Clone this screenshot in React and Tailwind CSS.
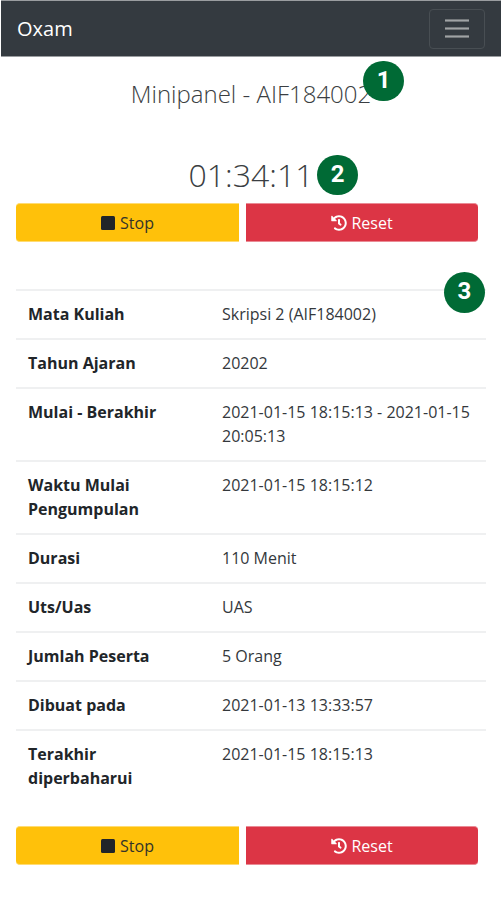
import { FaHistory } from "react-icons/fa";

const ROWS = [
  ["Mata Kuliah", "Skripsi 2 (AIF184002)"],
  ["Tahun Ajaran", "20202"],
  ["Mulai - Berakhir", "2021-01-15 18:15:13 - 2021-01-15 20:05:13"],
  ["Waktu Mulai Pengumpulan", "2021-01-15 18:15:12"],
  ["Durasi", "110 Menit"],
  ["Uts/Uas", "UAS"],
  ["Jumlah Peserta", "5 Orang"],
  ["Dibuat pada", "2021-01-13 13:33:57"],
  ["Terakhir diperbaharui", "2021-01-15 18:15:13"],
];

function Badge({ className, children }) {
  return (
    <span
      className={`absolute flex h-[40.6px] w-[40.6px] items-center justify-center rounded-full bg-[#006a35] pb-[2px] font-['Roboto',sans-serif] text-2xl font-bold text-white ${className}`}
    >
      {children}
    </span>
  );
}

function Actions() {
  return (
    <div className="flex h-[39px] w-[462px] gap-[7px] text-base leading-6">
      <button className="flex w-[223px] items-center justify-center gap-[5px] rounded-l border-y border-[#ffdc73] bg-[#ffc10a] text-[#33332a]">
        <span className="h-[14px] w-[14px] rounded-[1.5px] bg-[#212529]" />
        Stop
      </button>
      <button className="flex w-[232px] items-center justify-center gap-[4px] rounded-r border-y border-[#ea8b95] bg-[#dc3545] text-white">
        <FaHistory size={16} />
        Reset
      </button>
    </div>
  );
}

function MenuBar() {
  return <span className="h-[3px] w-6 border-y border-[#73777a] bg-[#a0a3a5]" />;
}

export default function App() {
  return (
    <div className="min-h-[898px] w-[501px] bg-white font-['Open_Sans',sans-serif] text-[#212529]">
      <nav className="ml-px flex h-[57px] items-center justify-between border-y border-[#9a9da0] bg-[#343a40] pr-4 pl-4">
        <span className="text-xl leading-[30px] text-white">Oxam</span>
        <button
          aria-label="Menu"
          className="flex h-10 w-14 flex-col items-center justify-center gap-[5px] rounded border border-[#484e53]"
        >
          <MenuBar />
          <MenuBar />
          <MenuBar />
        </button>
      </nav>

      <main className="pl-4">
        <header className="relative flex w-[470px] flex-col items-center pt-[22px] text-[#3a3e42]">
          <h1 className="text-2xl leading-[29px] font-light">Minipanel - AIF184002</h1>
          <Badge className="top-[3.8px] left-[347.4px]">1</Badge>
          <p className="mt-[48px] text-[32px] leading-[38px] font-light">01:34:11</p>
          <Badge className="top-[97.8px] left-[301.3px]">2</Badge>
        </header>

        <div className="mt-[9px]">
          <Actions />
        </div>

        <section className="relative mt-[47px] w-[470px]">
          <Badge className="top-[-17px] left-[428.2px]">3</Badge>
          <dl className="text-base leading-6">
            {ROWS.map(([label, value]) => (
              <div key={label} className="flex border-t-2 border-[#eff0f1] pt-[11px] pb-3">
                <dt className="w-[194px] shrink-0 pr-6 pl-3 font-bold">{label}</dt>
                <dd className="flex-1 pr-3 pl-3 text-[#34383c]">{value}</dd>
              </div>
            ))}
          </dl>
        </section>

        <div className="mt-[24px]">
          <Actions />
        </div>
      </main>
    </div>
  );
}
